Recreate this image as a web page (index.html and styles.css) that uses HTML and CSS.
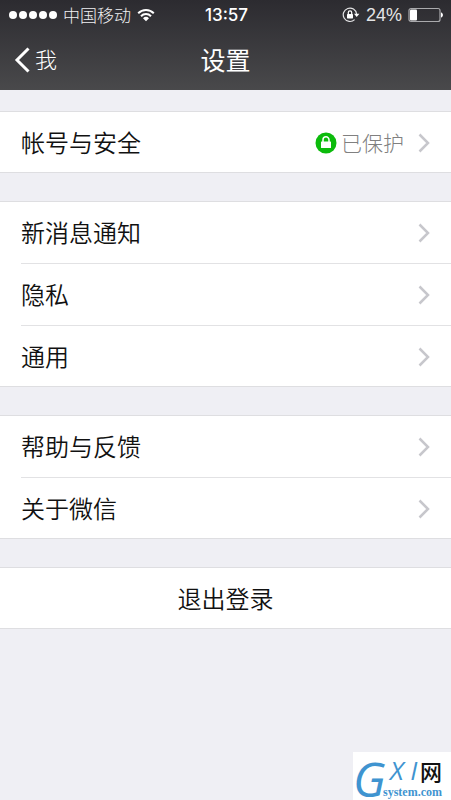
FILE: index.html
```html
<!DOCTYPE html>
<html lang="zh-CN">
<head>
<meta charset="utf-8">
<meta name="viewport" content="width=device-width, initial-scale=1">
<title>设置</title>
<link rel="stylesheet" href="styles.css">
</head>
<body>
<header class="top">
  <div class="status">
    <div class="status-left">
      <svg class="signal" width="48" height="10" viewBox="0 0 48 10" aria-hidden="true"><circle cx="4" cy="5" r="4"/><circle cx="14" cy="5" r="4"/><circle cx="24" cy="5" r="4"/><circle cx="34" cy="5" r="4"/><circle cx="44" cy="5" r="4"/></svg>
      <span class="carrier">中国移动</span>
      <svg class="wifi" width="18" height="14" viewBox="0 0 18 14" aria-hidden="true"><path d="M1.2 5.2a11 11 0 0 1 15.6 0M4 8.2a7 7 0 0 1 10 0" fill="none" stroke="#fff" stroke-width="2"/><path d="M9 13.3 6 10.3a4.3 4.3 0 0 1 6 0z" fill="#fff"/></svg>
    </div>
    <time class="clock">13:57</time>
    <div class="status-right">
      <svg class="rotation" width="18" height="16" viewBox="0 0 18 16" aria-hidden="true"><path d="M12.6 12.6A6.7 6.7 0 1 1 14.6 7" fill="none" stroke="#e4e4e6" stroke-width="1.2"/><path d="M12 6.7h5.4l-2.7 3.2z" fill="#fff"/><rect x="5" y="7" width="6" height="4.4" rx=".6" fill="#fff"/><path d="M6.3 7V5.6a1.7 1.7 0 0 1 3.4 0V7" fill="none" stroke="#fff" stroke-width="1.2"/></svg>
      <span class="percent">24%</span>
      <svg class="battery" width="36" height="16" viewBox="0 0 36 16" aria-hidden="true"><rect x="1" y="1.5" width="31" height="13" rx="2" fill="none" stroke="#aaaaad" stroke-width="1.2"/><rect x="2" y="2.5" width="7" height="11" rx="1" fill="#fff"/><path d="M33 5.5c2.6.5 2.6 4.5 0 5z" fill="#fff"/></svg>
    </div>
  </div>
  <nav class="bar">
    <a class="back" href="#me"><svg width="16" height="26" viewBox="0 0 16 26" aria-hidden="true"><path d="M14.5 1.5 3 13 14.5 24.5" fill="none" stroke="#fff" stroke-width="3"/></svg><span class="back-text">我</span></a>
    <h1 class="title">设置</h1>
  </nav>
</header>
<main class="settings">
  <section class="group">
    <a class="row" href="#account"><span class="label">帐号与安全</span>
      <span class="state"><svg width="22" height="22" viewBox="0 0 22 22" aria-hidden="true"><circle cx="11" cy="11" r="10.5" fill="#0cbb0c"/><rect x="6" y="9.5" width="10" height="6.5" rx=".6" fill="#fff"/><path d="M8 10V7.8a3 3 0 0 1 6 0V10" fill="none" stroke="#fff" stroke-width="1.5"/></svg><span class="state-text">已保护</span></span>
      <svg class="chevron" viewBox="0 0 12 20" aria-hidden="true"><path d="m1.5 1.5 8.5 8.5-8.5 8.5"/></svg></a>
  </section>
  <section class="group">
    <a class="row" href="#notifications"><span class="label">新消息通知</span><svg class="chevron" viewBox="0 0 12 20" aria-hidden="true"><path d="m1.5 1.5 8.5 8.5-8.5 8.5"/></svg></a>
    <a class="row" href="#privacy"><span class="label">隐私</span><svg class="chevron" viewBox="0 0 12 20" aria-hidden="true"><path d="m1.5 1.5 8.5 8.5-8.5 8.5"/></svg></a>
    <a class="row" href="#general"><span class="label">通用</span><svg class="chevron" viewBox="0 0 12 20" aria-hidden="true"><path d="m1.5 1.5 8.5 8.5-8.5 8.5"/></svg></a>
  </section>
  <section class="group">
    <a class="row" href="#help"><span class="label">帮助与反馈</span><svg class="chevron" viewBox="0 0 12 20" aria-hidden="true"><path d="m1.5 1.5 8.5 8.5-8.5 8.5"/></svg></a>
    <a class="row" href="#about"><span class="label">关于微信</span><svg class="chevron" viewBox="0 0 12 20" aria-hidden="true"><path d="m1.5 1.5 8.5 8.5-8.5 8.5"/></svg></a>
  </section>
  <section class="group">
    <button class="logout" type="button">退出登录</button>
  </section>
</main>
<aside class="watermark">
  <span class="mark-g">G</span>
  <span class="mark-xi">X I</span>
  <span class="mark-net">网</span>
  <span class="mark-site">system.com</span>
</aside>
</body>
</html>
```
FILE: styles.css
```css
* {
  box-sizing: border-box;
}

body {
  margin: 0;
  min-height: 100vh;
  position: relative;
  background: #efeff4;
  color: #111;
  font-family: "Noto Sans CJK SC", sans-serif;
  font-weight: 350;
}

a {
  color: inherit;
  text-decoration: none;
}

svg {
  display: block;
  flex: none;
}

.top {
  height: 90px;
  background: linear-gradient(#2c2b30, #49494b);
  color: #fff;
}

.status {
  display: grid;
  grid-template-columns: 1fr auto 1fr;
  align-items: center;
  height: 30px;
  padding: 0 7px 0 9px;
}

.status-left,
.status-right {
  display: flex;
  align-items: center;
}

.status-left {
  gap: 6px;
}

.status-right {
  justify-content: flex-end;
  gap: 6px;
}

.signal {
  fill: #fff;
}

.carrier {
  font-size: 17px;
  line-height: 24px;
  font-weight: 300;
  color: #f0f0f2;
}

.clock {
  font-family: Inter, "Liberation Sans", sans-serif;
  font-size: 17px;
  line-height: 24px;
  font-weight: 500;
}

.percent {
  font-family: "Liberation Sans", sans-serif;
  font-size: 18px;
  line-height: 24px;
  color: #e4e4e6;
}

.bar {
  display: grid;
  grid-template-columns: 1fr auto 1fr;
  align-items: center;
  height: 60px;
  padding: 0 14px;
}

.back {
  display: flex;
  align-items: center;
  gap: 5px;
  font-size: 22px;
  line-height: 32px;
  font-weight: 300;
}

.title {
  margin: 0;
  font-size: 25px;
  line-height: 36px;
  font-weight: 400;
}

.back-text,
.title,
.label,
.state-text,
.logout {
  padding-bottom: 2px;
}

.back-text {
  padding-bottom: 4px;
}

.settings {
  display: flex;
  flex-direction: column;
  gap: 28px;
  padding-top: 21px;
}

.group {
  background: #fff;
  box-shadow: inset 0 1px #dedee1, inset 0 -1px #dedee1;
}

.row {
  display: flex;
  align-items: center;
  height: 62px;
  margin-left: 21px;
  padding: 2px 21px 0 0;
}

.row + .row {
  box-shadow: inset 0 1px #e2e2e4;
}

.label {
  flex: 1;
  font-size: 24px;
  line-height: 36px;
}

.state {
  display: flex;
  align-items: center;
  gap: 4px;
  margin-right: 14px;
  color: #808080;
  font-size: 21px;
  line-height: 32px;
  font-weight: 300;
}

.chevron {
  width: 12px;
  height: 20px;
  fill: none;
  stroke: #c7c7cc;
  stroke-width: 2.5;
}

.logout {
  display: block;
  width: 100%;
  height: 62px;
  padding: 0 0 2px;
  border: 0;
  background: none;
  color: inherit;
  font: inherit;
  font-size: 24px;
}

.watermark {
  position: absolute;
  right: 0;
  bottom: 0;
  width: 98px;
  height: 48px;
  overflow: hidden;
  background: #fff;
  color: #3f94d0;
  white-space: nowrap;
}

.watermark span {
  position: absolute;
}

.mark-g {
  left: 0;
  top: 6px;
  font: italic 48px/42px "Open Sans", sans-serif;
}

.mark-xi {
  left: 37px;
  top: 5px;
  font: italic 26px/26px "Open Sans", sans-serif;
}

.mark-net {
  left: 67px;
  top: 6px;
  color: #111;
  font: 500 22px/24px "Noto Sans CJK SC", sans-serif;
}

.mark-site {
  left: 30px;
  top: 33px;
  font: 700 12px/14px "Liberation Serif", serif;
}
```
